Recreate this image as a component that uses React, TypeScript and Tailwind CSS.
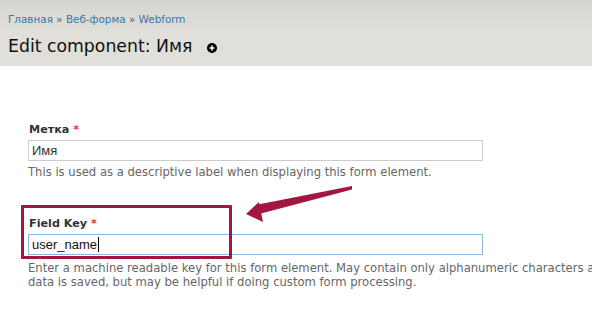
import React from "react";

export default function App() {
  const dv = { fontFamily: '"DejaVu Sans", Verdana, sans-serif' };
  const ar = { fontFamily: '"Liberation Sans", Arial, sans-serif' };
  return (
    <div className="relative w-[592px] h-[316px] overflow-hidden bg-white" style={dv}>
      <div className="h-[66px] bg-[#e0dfd9] bg-gradient-to-b from-[#d6d5cf] via-[#e0dfd9] to-[#e0dfd9] px-[8px] pt-[12px]">
        <div className="text-[10.4px] leading-[14px] text-[#3a78a8] whitespace-nowrap">
          <span>Главная</span> <span className="text-[#555]">»</span> <span>Веб-форма</span>{" "}
          <span className="text-[#555]">»</span> <span>Webform</span>
        </div>
        <div className="mt-[8px] flex items-center">
          <span className="text-[17.3px] leading-[24px] text-[#111]">Edit component: Имя</span>
          <span className="ml-[15px] mt-[3px] w-[10px] h-[10px] rounded-full bg-black flex items-center justify-center">
            <svg width="6" height="6" viewBox="0 0 6 6">
              <path d="M3 0.5v5M0.5 3h5" stroke="white" strokeWidth="1.6" />
            </svg>
          </span>
        </div>
      </div>

      <div className="pl-[28px] pt-[56px] w-[483px]">
        <div className="text-[11.2px] leading-[16px] font-bold text-[#333] pl-[1px]">
          Метка <span className="text-[#e32]">*</span>
        </div>
        <div
          className="mt-[2px] h-[21px] border border-[#ccc] pl-[3px] text-[13px] leading-[19px] text-[#333]"
          style={ar}
        >
          Имя
        </div>
        <div className="mt-[4px] text-[11.6px] leading-[14px] text-[#666] whitespace-nowrap">
          This is used as a descriptive label when displaying this form element.
        </div>

        <div className="mt-[37px] text-[11.2px] leading-[16px] font-bold text-[#333] pl-[1px]">
          Field Key <span className="text-[#e32]">*</span>
        </div>
        <div
          className="mt-[2px] h-[21px] border border-[#8fb5db] pl-[3px] text-[13px] leading-[19px] text-[#111] flex items-center"
          style={ar}
        >
          user_name<span className="ml-[1px] w-[1px] h-[15px] bg-black" />
        </div>
        <div className="mt-[6px] text-[11.6px] leading-[14px] text-[#666] whitespace-nowrap">
          Enter a machine readable key for this form element. May contain only alphanumeric characters and underscores.
          <br />
          data is saved, but may be helpful if doing custom form processing.
        </div>
      </div>

      <div className="absolute left-[21px] top-[205px] w-[211px] h-[54px] border-[3px] border-[#a3163f] rounded-[1px]" />
      <svg className="absolute left-0 top-0" width="592" height="316" viewBox="0 0 592 316">
        <path d="M352 186 L258 204.5 L261 213.5 L352 189.5 Z" fill="#a3163f" />
        <path d="M246 214 L259 202 L263 222 Z" fill="#a3163f" />
      </svg>
    </div>
  );
}
